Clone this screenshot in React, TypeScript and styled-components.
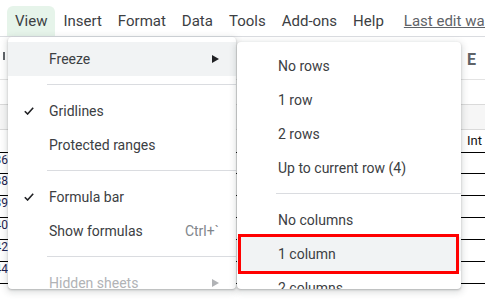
import React from 'react'
import styled, { createGlobalStyle } from 'styled-components'

const GlobalStyle = createGlobalStyle`
  body {
    margin: 0;
    background: #fff;
    font-family: Roboto, "Noto Sans", Arial, sans-serif;
  }
`

const Page = styled.div`
  position: relative;
  width: 485px;
  height: 300px;
  overflow: hidden;
  background: #fff;
`

const MenuBar = styled.div`
  display: flex;
  align-items: flex-end;
  height: 36px;
  padding-left: 7px;
  border-bottom: 1px solid #dadce0;
  white-space: nowrap;
`

const MenuTab = styled.div<{ $active?: boolean }>`
  flex: none;
  height: 30px;
  line-height: 30px;
  padding: 0 8px;
  font-size: 15px;
  color: #3c4043;
  border-radius: 6px 6px 0 0;
  background: ${p => (p.$active ? '#e6f4ea' : 'transparent')};
`

const LastEdit = styled.div`
  flex: none;
  height: 30px;
  line-height: 30px;
  margin-left: 12px;
  font-size: 15px;
  color: #5f6368;
  text-decoration: underline;
`

const Sheet = styled.div`
  display: flex;
  flex-direction: column;
`

const Row = styled.div<{ $h: number; $line: string; $bg?: string }>`
  display: flex;
  align-items: flex-start;
  height: ${p => p.$h}px;
  box-sizing: border-box;
  border-bottom: 1px solid ${p => p.$line};
  background: ${p => p.$bg || 'transparent'};
`

const RowHead = styled.div`
  display: flex;
  justify-content: flex-end;
  width: 8px;
  overflow: hidden;
  padding-top: 1px;
  font-size: 12px;
  line-height: 12px;
  color: #1c2150;
`

const RightCell = styled.div<{ $size?: number; $bold?: boolean; $top?: number }>`
  margin-left: auto;
  width: 18px;
  overflow: hidden;
  white-space: nowrap;
  padding-top: ${p => p.$top ?? 0}px;
  font-size: ${p => p.$size ?? 13}px;
  font-weight: ${p => (p.$bold ? 700 : 400)};
  color: ${p => (p.$bold ? '#5f6368' : '#111')};
`

const ToolStub = styled.div`
  width: 2px;
  height: 8px;
  margin: 15px 0 0 3px;
  background: #5f6368;
`

const Menu = styled.div<{ $left: number; $top: number; $w: number; $pad: number }>`
  position: absolute;
  left: ${p => p.$left}px;
  top: ${p => p.$top}px;
  width: ${p => p.$w}px;
  bottom: 11px;
  padding-top: ${p => p.$pad}px;
  box-sizing: border-box;
  overflow: hidden;
  background: #fff;
  border-radius: 4px;
  box-shadow: 0 2px 6px 2px rgba(60, 64, 67, 0.15), 0 1px 2px rgba(60, 64, 67, 0.3);
`

const Item = styled.div<{ $hover?: boolean; $disabled?: boolean; $marked?: boolean }>`
  position: relative;
  display: flex;
  align-items: center;
  height: 34px;
  padding: 0 17px 0 16px;
  font-size: 14px;
  white-space: nowrap;
  color: ${p => (p.$disabled ? '#b1b3b6' : '#3c4043')};
  background: ${p => (p.$hover || p.$marked ? '#f1f3f4' : 'transparent')};

  ${p =>
    p.$marked &&
    `
    &::after {
      content: '';
      position: absolute;
      left: 1px;
      right: 2px;
      top: -3px;
      bottom: -3px;
      border: 3px solid #ff0000;
    }
  `}
`

const CheckSlot = styled.div`
  display: flex;
  align-items: center;
  width: 25px;
  flex: none;
`

const Shortcut = styled.span`
  margin-left: auto;
  color: #80868b;
`

const Arrow = styled.svg`
  margin-left: auto;
`

const Separator = styled.div`
  height: 1px;
  margin: 8px 0 9px 39px;
  background: #dadce0;
`

const Check = () => (
  <svg width="10" height="8" viewBox="0 0 10 8">
    <path d="M0.8 4.2 L3.6 7 L9.2 0.8" fill="none" stroke="#202124" strokeWidth="1.6" />
  </svg>
)

const SubArrow = ({ color }: { color: string }) => (
  <Arrow width="7" height="8" viewBox="0 0 7 8">
    <path d="M0 0 L7 4 L0 8 Z" fill={color} />
  </Arrow>
)

const tabs = ['View', 'Insert', 'Format', 'Data', 'Tools', 'Add-ons', 'Help']

const sheetRows = [
  { h: 43, line: '#e3e3e3' },
  { h: 25, line: '#dadada' },
  { h: 25, line: '#dadada', bg: '#f6f6f6' },
  { h: 23, line: '#000' },
  { h: 21, line: '#000', num: '36' },
  { h: 22, line: '#000', num: '38' },
  { h: 22, line: '#000', num: '39' },
  { h: 22, line: '#000', num: '40' },
  { h: 22, line: '#000', num: '42' },
  { h: 22, line: '#000', num: '44' },
]

export default function App() {
  return (
    <Page>
      <GlobalStyle />
      <MenuBar>
        {tabs.map(t => (
          <MenuTab key={t} $active={t === 'View'}>
            {t}
          </MenuTab>
        ))}
        <LastEdit>Last edit was seconds ago</LastEdit>
      </MenuBar>

      <Sheet>
        {sheetRows.map((r, i) => (
          <Row key={i} $h={r.h} $line={r.line} $bg={r.bg}>
            {i === 0 ? <ToolStub /> : <RowHead>{r.num}</RowHead>}
            {i === 0 && (
              <RightCell $size={16} $bold $top={13}>
                E
              </RightCell>
            )}
            {i === 3 && <RightCell $top={3}>Int</RightCell>}
          </Row>
        ))}
      </Sheet>

      <Menu $left={8} $top={37} $w={228} $pad={5}>
        <Item $hover>
          <CheckSlot />
          Freeze
          <SubArrow color="#202124" />
        </Item>
        <Separator />
        <Item>
          <CheckSlot>
            <Check />
          </CheckSlot>
          Gridlines
        </Item>
        <Item>
          <CheckSlot />
          Protected ranges
        </Item>
        <Separator />
        <Item>
          <CheckSlot>
            <Check />
          </CheckSlot>
          Formula bar
        </Item>
        <Item>
          <CheckSlot />
          Show formulas
          <Shortcut>Ctrl+`</Shortcut>
        </Item>
        <Separator />
        <Item $disabled>
          <CheckSlot />
          Hidden sheets
          <SubArrow color="#b1b3b6" />
        </Item>
      </Menu>

      <Menu $left={237} $top={42} $w={224} $pad={7}>
        <Item>
          <CheckSlot />
          No rows
        </Item>
        <Item>
          <CheckSlot />
          1 row
        </Item>
        <Item>
          <CheckSlot />
          2 rows
        </Item>
        <Item>
          <CheckSlot />
          Up to current row (4)
        </Item>
        <Separator />
        <Item>
          <CheckSlot />
          No columns
        </Item>
        <Item $marked>
          <CheckSlot />
          1 column
        </Item>
        <Item>
          <CheckSlot />
          2 columns
        </Item>
      </Menu>
    </Page>
  )
}
